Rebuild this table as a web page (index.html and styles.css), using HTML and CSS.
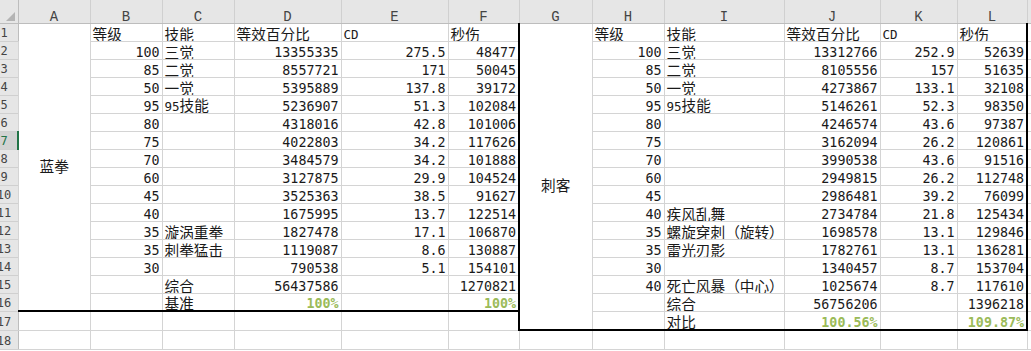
FILE: index.html
```html
<!DOCTYPE html>
<html lang="zh-CN">
<head>
<meta charset="utf-8">
<title>蓝拳 / 刺客</title>
<link rel="stylesheet" href="styles.css">
</head>
<body>
<table class="sheet">
<colgroup>
<col class="c-rh"><col class="c72"><col class="c72"><col class="c72"><col class="c107"><col class="c107"><col class="c71"><col class="c73"><col class="c72"><col class="c120"><col class="c96"><col class="c77"><col class="c70"><col class="c72">
</colgroup>
<tr class="hd">
<th class="corner"><div class="tri"></div></th>
<th class="ch">A</th><th class="ch">B</th><th class="ch">C</th><th class="ch">D</th><th class="ch">E</th><th class="ch">F</th><th class="ch">G</th><th class="ch">H</th><th class="ch">I</th><th class="ch">J</th><th class="ch">K</th><th class="ch">L</th><th class="ch"></th>
</tr>
<tr class="r">
<th class="rh"><div class="rn"><span>1</span></div></th>
<td class="m bb" rowspan="16">蓝拳</td>
<td class="t">等级</td><td class="t">技能</td><td class="t">等效百分比</td><td class="t"><span class="lat">CD</span></td><td class="t br">秒伤</td>
<td class="m bl bb mg" rowspan="17">刺客</td>
<td class="t">等级</td><td class="t">技能</td><td class="t">等效百分比</td><td class="t"><span class="lat">CD</span></td><td class="t br">秒伤</td>
<td></td>
</tr>
<tr class="r">
<th class="rh"><div class="rn"><span>2</span></div></th>
<td class="n">100</td><td class="t">三觉</td><td class="n">13355335</td><td class="n">275.5</td><td class="n br">48477</td>
<td class="n">100</td><td class="t">三觉</td><td class="n">13312766</td><td class="n">252.9</td><td class="n br">52639</td>
<td></td>
</tr>
<tr class="r">
<th class="rh"><div class="rn"><span>3</span></div></th>
<td class="n">85</td><td class="t">二觉</td><td class="n">8557721</td><td class="n">171</td><td class="n br">50045</td>
<td class="n">85</td><td class="t">二觉</td><td class="n">8105556</td><td class="n">157</td><td class="n br">51635</td>
<td></td>
</tr>
<tr class="r">
<th class="rh"><div class="rn"><span>4</span></div></th>
<td class="n">50</td><td class="t">一觉</td><td class="n">5395889</td><td class="n">137.8</td><td class="n br">39172</td>
<td class="n">50</td><td class="t">一觉</td><td class="n">4273867</td><td class="n">133.1</td><td class="n br">32108</td>
<td></td>
</tr>
<tr class="r">
<th class="rh"><div class="rn"><span>5</span></div></th>
<td class="n">95</td><td class="t"><span class="lat">95</span>技能</td><td class="n">5236907</td><td class="n">51.3</td><td class="n br">102084</td>
<td class="n">95</td><td class="t"><span class="lat">95</span>技能</td><td class="n">5146261</td><td class="n">52.3</td><td class="n br">98350</td>
<td></td>
</tr>
<tr class="r">
<th class="rh"><div class="rn"><span>6</span></div></th>
<td class="n">80</td><td class="t"></td><td class="n">4318016</td><td class="n">42.8</td><td class="n br">101006</td>
<td class="n">80</td><td class="t"></td><td class="n">4246574</td><td class="n">43.6</td><td class="n br">97387</td>
<td></td>
</tr>
<tr class="r">
<th class="rh sel"><div class="rn"><span>7</span></div></th>
<td class="n">75</td><td class="t"></td><td class="n">4022803</td><td class="n">34.2</td><td class="n br">117626</td>
<td class="n">75</td><td class="t"></td><td class="n">3162094</td><td class="n">26.2</td><td class="n br">120861</td>
<td></td>
</tr>
<tr class="r">
<th class="rh"><div class="rn"><span>8</span></div></th>
<td class="n">70</td><td class="t"></td><td class="n">3484579</td><td class="n">34.2</td><td class="n br">101888</td>
<td class="n">70</td><td class="t"></td><td class="n">3990538</td><td class="n">43.6</td><td class="n br">91516</td>
<td></td>
</tr>
<tr class="r">
<th class="rh"><div class="rn"><span>9</span></div></th>
<td class="n">60</td><td class="t"></td><td class="n">3127875</td><td class="n">29.9</td><td class="n br">104524</td>
<td class="n">60</td><td class="t"></td><td class="n">2949815</td><td class="n">26.2</td><td class="n br">112748</td>
<td></td>
</tr>
<tr class="r">
<th class="rh"><div class="rn"><span>10</span></div></th>
<td class="n">45</td><td class="t"></td><td class="n">3525363</td><td class="n">38.5</td><td class="n br">91627</td>
<td class="n">45</td><td class="t"></td><td class="n">2986481</td><td class="n">39.2</td><td class="n br">76099</td>
<td></td>
</tr>
<tr class="r">
<th class="rh"><div class="rn"><span>11</span></div></th>
<td class="n">40</td><td class="t"></td><td class="n">1675995</td><td class="n">13.7</td><td class="n br">122514</td>
<td class="n">40</td><td class="t">疾风乱舞</td><td class="n">2734784</td><td class="n">21.8</td><td class="n br">125434</td>
<td></td>
</tr>
<tr class="r">
<th class="rh"><div class="rn"><span>12</span></div></th>
<td class="n">35</td><td class="t">漩涡重拳</td><td class="n">1827478</td><td class="n">17.1</td><td class="n br">106870</td>
<td class="n">35</td><td class="t">螺旋穿刺（旋转）</td><td class="n">1698578</td><td class="n">13.1</td><td class="n br">129846</td>
<td></td>
</tr>
<tr class="r">
<th class="rh"><div class="rn"><span>13</span></div></th>
<td class="n">35</td><td class="t">刺拳猛击</td><td class="n">1119087</td><td class="n">8.6</td><td class="n br">130887</td>
<td class="n">35</td><td class="t">雷光刃影</td><td class="n">1782761</td><td class="n">13.1</td><td class="n br">136281</td>
<td></td>
</tr>
<tr class="r">
<th class="rh"><div class="rn"><span>14</span></div></th>
<td class="n">30</td><td class="t"></td><td class="n">790538</td><td class="n">5.1</td><td class="n br">154101</td>
<td class="n">30</td><td class="t"></td><td class="n">1340457</td><td class="n">8.7</td><td class="n br">153704</td>
<td></td>
</tr>
<tr class="r">
<th class="rh"><div class="rn"><span>15</span></div></th>
<td class="n"></td><td class="t">综合</td><td class="n">56437586</td><td class="n"></td><td class="n br">1270821</td>
<td class="n">40</td><td class="t">死亡风暴（中心）</td><td class="n">1025674</td><td class="n">8.7</td><td class="n br">117610</td>
<td></td>
</tr>
<tr class="r">
<th class="rh"><div class="rn"><span>16</span></div></th>
<td class="n bb"></td><td class="t bb">基准</td><td class="n g bb">100%</td><td class="n bb"></td><td class="n g bb br">100%</td>
<td class="n"></td><td class="t">综合</td><td class="n">56756206</td><td class="n"></td><td class="n br">1396218</td>
<td></td>
</tr>
<tr class="r r17">
<th class="rh"><div class="rn"><span>17</span></div></th>
<td></td><td></td><td></td><td></td><td></td><td></td>
<td class="n bb"></td><td class="t bb">对比</td><td class="n g bb">100.56%</td><td class="n bb"></td><td class="n g bb br">109.87%</td>
<td></td>
</tr>
<tr class="r r18">
<th class="rh"><div class="rn"><span>18</span></div></th>
<td></td><td></td><td></td><td></td><td></td><td></td><td></td><td></td><td></td><td></td><td></td><td></td><td></td>
</tr>
</table>
</body>
</html>
```
FILE: styles.css
```css
html, body {
  margin: 0;
  padding: 0;
  background: #ffffff;
  overflow: hidden;
}

.sheet {
  border-collapse: collapse;
  table-layout: fixed;
  width: 1099px;
  font-family: "DejaVu Sans Mono", "Noto Sans CJK SC", monospace;
  font-size: 13.33px;
  color: #1a1a1a;
}

.c-rh { width: 18px; }
.c70 { width: 70px; }
.c71 { width: 71px; }
.c72 { width: 72px; }
.c73 { width: 73px; }
.c77 { width: 77px; }
.c96 { width: 96px; }
.c107 { width: 107px; }
.c120 { width: 120px; }

.hd { height: 23px; }
.r { height: 18px; }
.r17, .r18 { height: 19px; }

td {
  border: 1px solid #d4d4d4;
  padding: 0 3px;
  vertical-align: bottom;
  line-height: 12px;
  white-space: nowrap;
  overflow: hidden;
}

.t {
  text-align: left;
  font-size: 14.67px;
  padding-left: 2px;
}

.lat {
  font-size: 12.5px;
}

.n {
  text-align: right;
  padding-right: 2px;
}

.g {
  color: #9bbb59;
  font-weight: bold;
}

.m {
  text-align: center;
  vertical-align: middle;
  font-size: 14.67px;
  line-height: 16px;
}

.mg {
  padding-top: 19px;
}

.bb { border-bottom: 2px solid #000000; }
.br { border-right: 2px solid #000000; }
.bl { border-left: 2px solid #000000; }

/* headers */
th {
  background: #e6e6e6;
  font-weight: normal;
  padding: 0;
  color: #444444;
}

.corner {
  border-right: 1px solid #bdbdbd;
  border-bottom: 1px solid #bdbdbd;
  vertical-align: bottom;
}

.tri {
  width: 0;
  height: 0;
  margin: 0 3px 2px auto;
  border-left: 9px solid transparent;
  border-bottom: 9px solid #b4b4b4;
}

.ch {
  font-family: "Liberation Mono", monospace;
  font-size: 14px;
  line-height: 10px;
  vertical-align: top;
  padding-top: 12px;
  text-align: center;
  border-left: 1px solid #d0d0d0;
  border-right: 1px solid #d0d0d0;
  border-bottom: 1px solid #bdbdbd;
}

.rh {
  border-right: 1px solid #bdbdbd;
  border-bottom: 1px solid #d0d0d0;
  vertical-align: bottom;
}

.rn {
  width: 17px;
  overflow: hidden;
  font-family: "DejaVu Sans Mono", monospace;
  font-size: 12px;
  line-height: 12px;
  padding-bottom: 2px;
}

.rn span {
  display: flex;
  justify-content: center;
  width: 8px;
  white-space: nowrap;
}

.rh.sel {
  background: #d2d2d2;
  border-right: 2px solid #217346;
  color: #217346;
}
```
